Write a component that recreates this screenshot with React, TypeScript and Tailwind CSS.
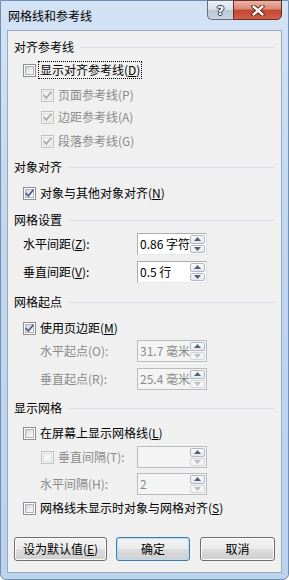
import React from "react";

const U = ({ c }: { c: string }) => <span className="underline underline-offset-[1px] decoration-1">{c}</span>;

function Check({ checked, disabled }: { checked?: boolean; disabled?: boolean }) {
  return (
    <span
      className={`relative w-[13px] h-[13px] shrink-0 border ${
        disabled ? "border-[#c2c2c2] bg-[#f4f4f4]" : "border-[#8e8f8f] bg-white"
      }`}
    >
      {!disabled && (
        <span className="absolute left-[1px] top-[1px] w-[9px] h-[9px] border border-[#b0b4b9] bg-[linear-gradient(135deg,#cfd3d8_0%,#eef0f2_60%,#fbfbfb_100%)]" />
      )}
      {disabled && <span className="absolute left-[1px] top-[1px] w-[9px] h-[9px] border border-[#dedede] bg-[#f4f4f4]" />}
      {checked && (
        <svg className="absolute left-0 top-0" width="11" height="11" viewBox="0 0 11 11">
          <path
            d="M2.2 5.6 L4.4 8 L8.8 2.4"
            fill="none"
            stroke={disabled ? "#a8a8a8" : "#4a5a8a"}
            strokeWidth="1.7"
            strokeLinecap="square"
          />
        </svg>
      )}
    </span>
  );
}

function Header({ title, mt }: { title: string; mt: string }) {
  return (
    <div className={`h-[20px] flex items-center pl-[6px] pr-[6px] ${mt}`}>
      <span className="text-black">{title}</span>
      <div className="flex-1 h-px bg-[#d6e0eb] ml-[6px]" />
    </div>
  );
}

function CbRow({
  level,
  checked,
  disabled,
  focus,
  children,
  mt,
}: {
  level: 1 | 2;
  checked?: boolean;
  disabled?: boolean;
  focus?: boolean;
  children: React.ReactNode;
  mt: string;
}) {
  return (
    <div className={`h-[20px] flex items-center ${level === 1 ? "pl-[15px]" : "pl-[33px]"} ${mt}`}>
      <Check checked={checked} disabled={disabled} />
      <span
        className={`ml-[3px] px-[1px] ${disabled ? "text-[#8a8a8a]" : "text-black"} ${
          focus ? "outline outline-1 outline-dotted outline-black" : ""
        }`}
      >
        {children}
      </span>
    </div>
  );
}

function Arrow({ up, disabled }: { up?: boolean; disabled?: boolean }) {
  return (
    <svg width="7" height="4" viewBox="0 0 7 4">
      <path d={up ? "M0 4 L3.5 0 L7 4 Z" : "M0 0 L3.5 4 L7 0 Z"} fill={disabled ? (up ? "#5c6f93" : "#b8bec8") : "#4d6185"} />
    </svg>
  );
}

function Spin({ value, disabled, downDisabled }: { value: string; disabled?: boolean; downDisabled?: boolean }) {
  return (
    <div
      className={`w-[70px] h-[22px] flex border ${
        disabled ? "border-[#b8bcc0] bg-[#f4f4f4]" : "border-[#abadb3] border-b-[#e3e9ef] border-r-[#dbdfe6] bg-white"
      }`}
    >
      <div className={`flex-1 flex items-center pl-[2px] whitespace-nowrap overflow-hidden ${disabled ? "text-[#8a8a8a]" : "text-black"}`}>
        {value}
      </div>
      <div className="w-[16px] flex flex-col gap-[1px] py-[1px] pr-[1px]">
        <div className="flex-1 flex items-center justify-center border border-[#b4b8bf] rounded-[2px] bg-[linear-gradient(to_bottom,#fbfbfb,#e4e6ea)]">
          <Arrow up disabled={false} />
        </div>
        <div
          className={`flex-1 flex items-center justify-center border rounded-[2px] ${
            downDisabled ? "border-[#d2d4d8] bg-[#f4f4f4]" : "border-[#b4b8bf] bg-[linear-gradient(to_bottom,#fbfbfb,#e4e6ea)]"
          }`}
        >
          <Arrow disabled={downDisabled} />
        </div>
      </div>
    </div>
  );
}

function SpinRow({
  label,
  value,
  indent,
  disabled,
  downDisabled,
  mt,
  checkbox,
}: {
  label: React.ReactNode;
  value: string;
  indent: 1 | 2;
  disabled?: boolean;
  downDisabled?: boolean;
  mt: string;
  checkbox?: boolean;
}) {
  return (
    <div className={`h-[22px] flex items-center ${mt}`}>
      <div className={`w-[129px] flex items-center ${checkbox ? "pl-[33px]" : indent === 1 ? "pl-[15px]" : "pl-[32px]"}`}>
        {checkbox && <Check disabled />}
        <span className={`${checkbox ? "ml-[4px]" : ""} ${disabled ? "text-[#8a8a8a]" : "text-black"}`}>{label}</span>
      </div>
      <Spin value={value} disabled={disabled} downDisabled={downDisabled} />
    </div>
  );
}

function Btn({ children, w, def }: { children: React.ReactNode; w: string; def?: boolean }) {
  return (
    <div
      className={`${w} h-[24px] rounded-[3px] border ${
        def ? "border-[#3c7fb1] shadow-[inset_0_0_0_1px_#b8dcf3]" : "border-[#707070] shadow-[inset_0_0_0_1px_#fcfcfc]"
      } bg-[linear-gradient(to_bottom,#f2f2f2_0%,#ebebeb_50%,#dddddd_50%,#cfcfcf_100%)] flex items-center justify-center text-black`}
    >
      {children}
    </div>
  );
}

export default function App() {
  return (
    <div className="w-[289px] h-[580px] bg-white font-['Noto_Sans_CJK_SC',sans-serif] text-[12px] leading-[16px]">
      <div className="w-[289px] h-[580px] rounded-b-[6px] border border-[#6f8fb4] bg-[linear-gradient(to_bottom,#d3e3f4_0%,#c2d7ee_40%,#bcd3ec_100%)] flex flex-col">
        {/* title bar */}
        <div className="h-[29px] flex items-start">
          <div className="pl-[7px] pt-[7px] text-black">网格线和参考线</div>
          <div className="flex-1" />
          <div className="flex mr-[6px] mt-[-1px]">
            <div className="w-[26px] h-[20px] rounded-bl-[5px] border border-[#5e6f86] border-r-0 bg-[linear-gradient(to_bottom,#eef2f7_0%,#d6dee8_50%,#bcc7d5_51%,#c9d3df_100%)] flex items-center justify-center">
              <span className="text-white font-bold text-[13px] leading-[13px] font-['DejaVu_Sans',sans-serif] [text-shadow:0_0_1px_#2a3a55,0_0_1px_#2a3a55,1px_0_0_#3a4a65,-1px_0_0_#3a4a65,0_1px_0_#3a4a65,0_-1px_0_#3a4a65]">
                ?
              </span>
            </div>
            <div className="w-[49px] h-[20px] rounded-br-[5px] border border-[#6b2a22] bg-[linear-gradient(to_bottom,#eab4a6_0%,#d98672_45%,#c5452f_52%,#d0614a_100%)] flex items-center justify-center">
              <svg width="14" height="11" viewBox="0 0 14 11">
                <path d="M2.5 1.5 L11.5 9.5 M11.5 1.5 L2.5 9.5" stroke="#4a1a14" strokeWidth="4.2" strokeLinecap="round" />
                <path d="M2.5 1.5 L11.5 9.5 M11.5 1.5 L2.5 9.5" stroke="#ffffff" strokeWidth="2.4" strokeLinecap="round" />
              </svg>
            </div>
          </div>
        </div>
        {/* panel */}
        <div className="ml-[6px] w-[275px] h-[543px] border border-[#99a8bd] bg-[#f0f0f0] flex flex-col">
          <Header title="对齐参考线" mt="mt-[6px]" />
          <CbRow level={1} focus mt="mt-[3px]">
            显示对齐参考线(<U c="D" />)
          </CbRow>
          <CbRow level={2} checked disabled mt="mt-[5px]">
            页面参考线(P)
          </CbRow>
          <CbRow level={2} checked disabled mt="mt-[2px]">
            边距参考线(A)
          </CbRow>
          <CbRow level={2} checked disabled mt="mt-[4px]">
            段落参考线(G)
          </CbRow>
          <Header title="对象对齐" mt="mt-[6px]" />
          <CbRow level={1} checked mt="mt-[6px]">
            对象与其他对象对齐(<U c="N" />)
          </CbRow>
          <Header title="网格设置" mt="mt-[7px]" />
          <SpinRow indent={1} label={<>水平间距(<U c="Z" />):</>} value="0.86 字符" mt="mt-[3px]" />
          <SpinRow indent={1} label={<>垂直间距(<U c="V" />):</>} value="0.5 行" mt="mt-[6px]" />
          <Header title="网格起点" mt="mt-[9px]" />
          <CbRow level={1} checked mt="mt-[6px]">
            使用页边距(<U c="M" />)
          </CbRow>
          <SpinRow indent={2} disabled downDisabled label="水平起点(O):" value="31.7 毫米" mt="mt-[2px]" />
          <SpinRow indent={2} disabled downDisabled label="垂直起点(R):" value="25.4 毫米" mt="mt-[6px]" />
          <Header title="显示网格" mt="mt-[8px]" />
          <CbRow level={1} mt="mt-[5px]">
            在屏幕上显示网格线(<U c="L" />)
          </CbRow>
          <SpinRow indent={2} checkbox disabled downDisabled label="垂直间隔(T):" value="" mt="mt-[3px]" />
          <SpinRow indent={2} disabled downDisabled label="水平间隔(H):" value="2" mt="mt-[5px]" />
          <CbRow level={1} mt="mt-[3px]">
            网格线未显示时对象与网格对齐(<U c="S" />)
          </CbRow>
          <div className="flex mt-[19px] pl-[6px]">
            <Btn w="w-[93px]">
              设为默认值(<U c="E" />)
            </Btn>
            <div className="ml-[9px]">
              <Btn w="w-[74px]" def>
                确定
              </Btn>
            </div>
            <div className="ml-[10px]">
              <Btn w="w-[75px]">取消</Btn>
            </div>
          </div>
        </div>
      </div>
    </div>
  );
}
